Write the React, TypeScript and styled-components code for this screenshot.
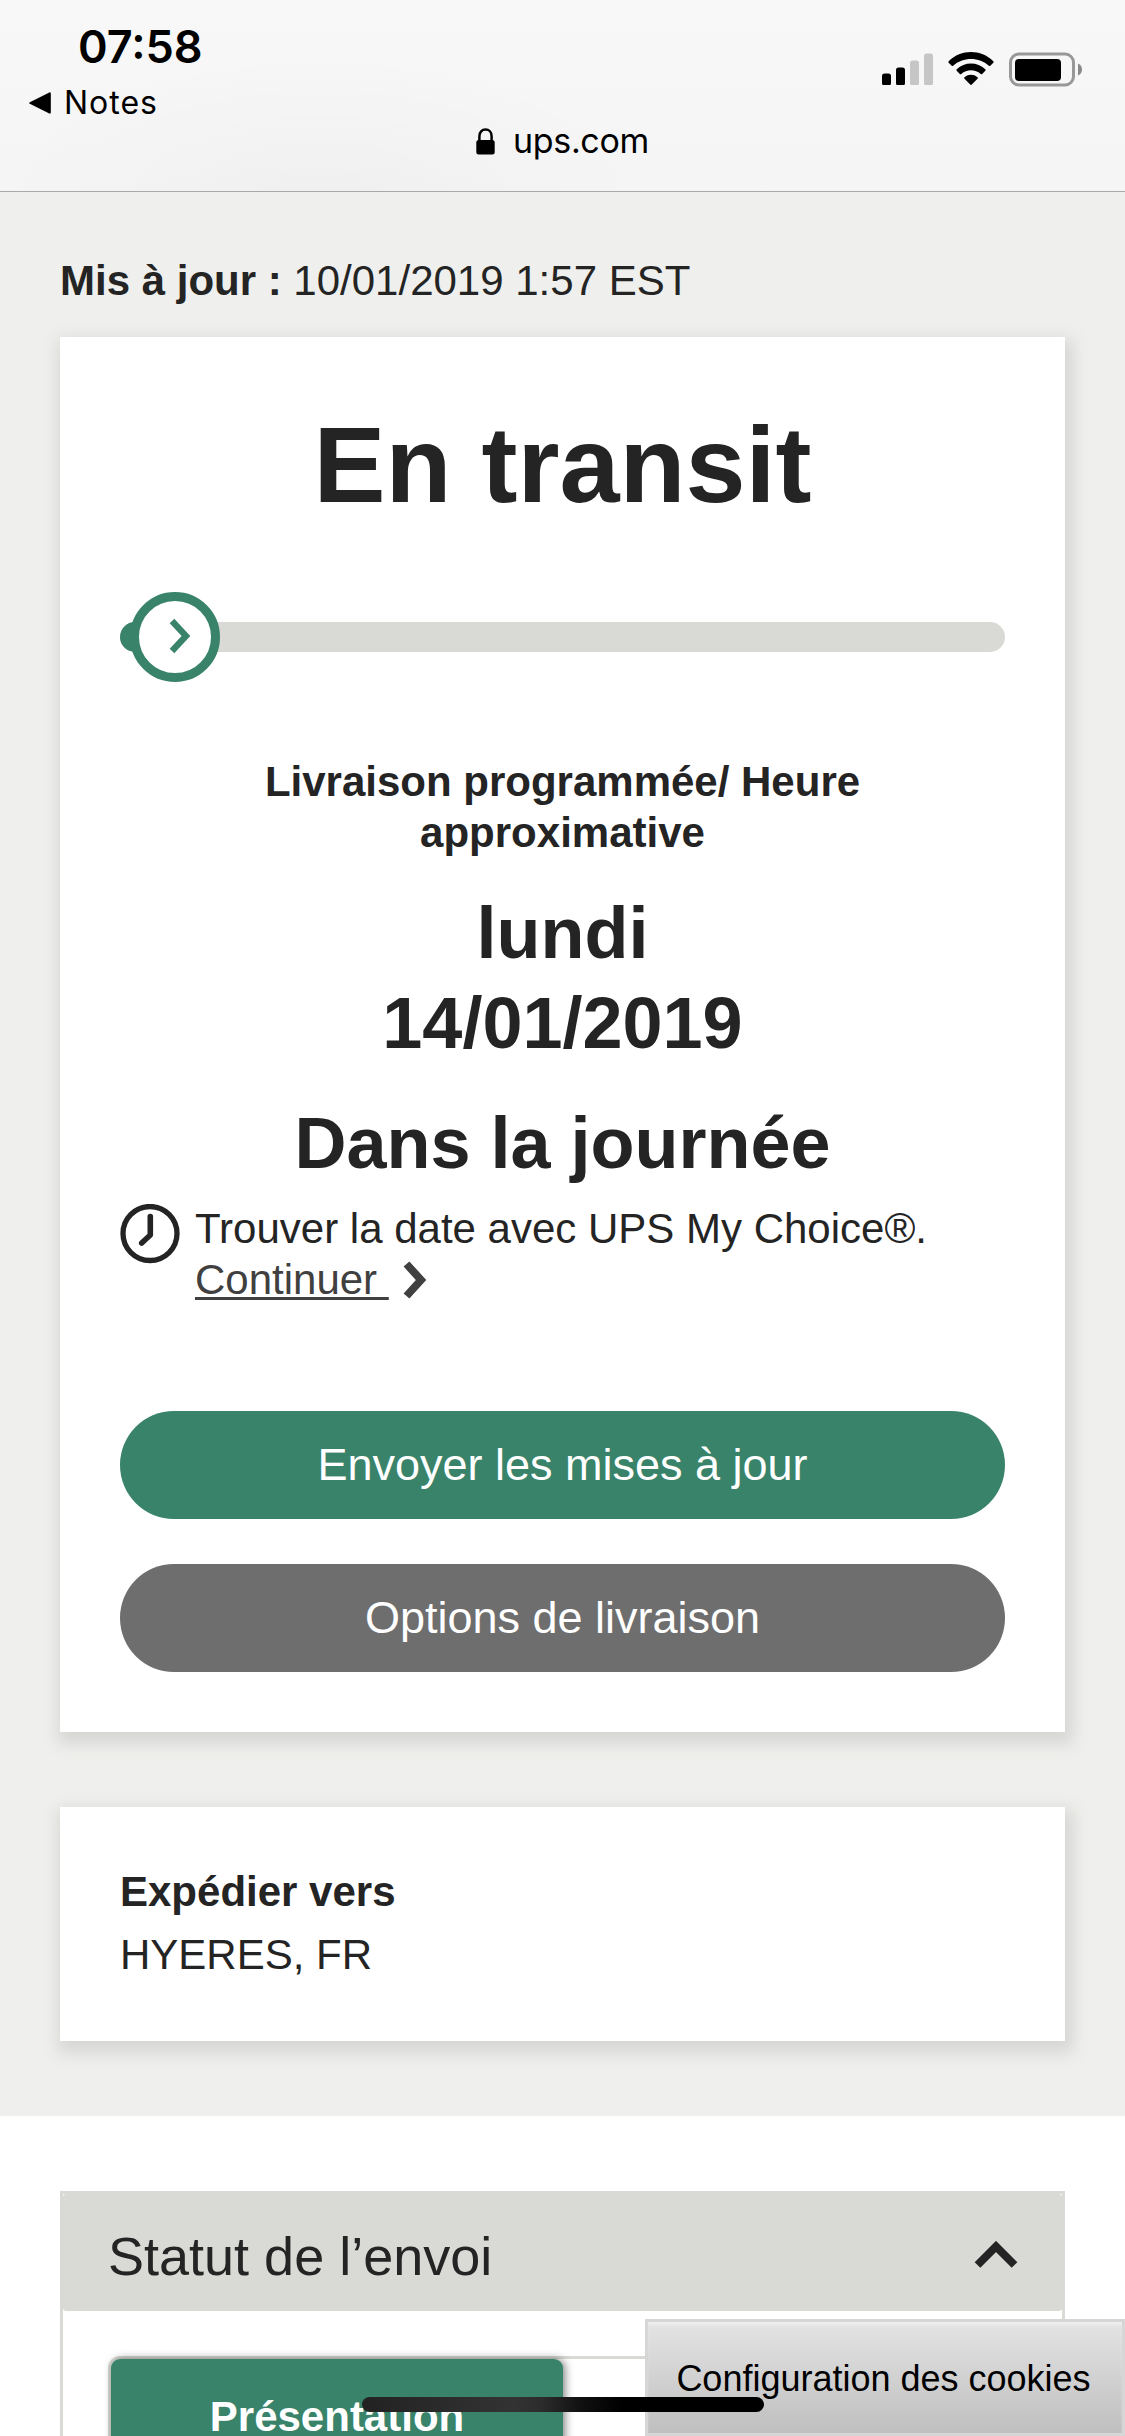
import React from "react";
import styled, { createGlobalStyle } from "styled-components";

const ink = "#242424";
const green = "#39836b";
const stone = "#d9dad5";

const GlobalStyle = createGlobalStyle`
  *, *::before, *::after { box-sizing: border-box; }
  body {
    margin: 0;
    background: #fff;
    color: ${ink};
    font-family: "Liberation Sans", Arial, Helvetica, sans-serif;
    font-size: 42px;
    line-height: 51px;
  }
  h1, h2, p { margin: 0; }
  button { font-family: inherit; cursor: pointer; }
  svg { display: block; flex: none; }
`;

const Screen = styled.div`
  width: 1125px;
  height: 2436px;
  overflow: hidden;
  position: relative;
`;

/* Browser chrome */
const BrowserBar = styled.header`
  display: flex;
  flex-direction: column;
  gap: 2px;
  height: 192px;
  padding-top: 21px;
  border-bottom: 1px solid #a9a9a9;
  background:
    radial-gradient(ellipse 330px 150px at 320px 200px, rgba(0, 0, 0, 0.025), rgba(0, 0, 0, 0) 100%),
    linear-gradient(#f8f8f8, #f5f5f5);
  color: #000;
  font-family: Inter, sans-serif;
`;

const StatusRow = styled.div`
  display: flex;
  justify-content: space-between;
  height: 98px;
  padding: 0 42px 0 29px;
`;

const StatusLeft = styled.div`
  display: flex;
  flex-direction: column;
  gap: 13px;
`;

const Clock = styled.div`
  padding-left: 49px;
  font-size: 45px;
  font-weight: 600;
  line-height: 52px;
`;

const BackLink = styled.div`
  display: flex;
  align-items: center;
  gap: 13px;
  font-size: 32px;
  line-height: 34px;
  letter-spacing: 1px;
`;

const StatusIcons = styled.div`
  display: flex;
  align-items: flex-start;
  padding-top: 30px;
`;

const AddressRow = styled.div`
  display: flex;
  align-items: center;
  justify-content: center;
  gap: 18px;
  font-size: 34px;
  line-height: 40px;
  letter-spacing: -0.3px;
`;

/* Tracking summary */
const Summary = styled.section`
  display: flex;
  flex-direction: column;
  padding: 63px 60px 75px;
  background: #efefed;
`;

const Updated = styled.p`
  margin-bottom: 31px;
`;

const Card = styled.div<{ $pad: string }>`
  display: flex;
  flex-direction: column;
  padding: ${(p) => p.$pad};
  background: #fff;
  box-shadow: 3px 7px 15px 5px #d6d6d4;

  & + & { margin-top: 75px; }
`;

const Status = styled.h1`
  font-size: 108px;
  line-height: 130px;
  text-align: center;
`;

const Progress = styled.div`
  display: flex;
  align-items: center;
  position: relative;
  height: 90px;
  margin: 62px 0 74px;
`;

const Track = styled.div`
  flex: 1;
  height: 30px;
  border-radius: 15px;
  background: ${stone};
  overflow: hidden;
`;

const TrackFill = styled.div`
  width: 55px;
  height: 100%;
  background: ${green};
`;

const Knob = styled.div`
  position: absolute;
  left: 10px;
  top: 0;
  display: grid;
  place-items: center;
  width: 90px;
  height: 90px;
  padding: 0 0 2px 9px;
  border: 9px solid ${green};
  border-radius: 50%;
  background: #fff;
`;

const ScheduleLabel = styled.p`
  padding: 0 120px;
  font-weight: 700;
  text-align: center;
`;

const ScheduleValue = styled.p`
  margin-top: 30px;
  font-size: 72px;
  font-weight: 700;
  line-height: 90px;
  text-align: center;
`;

const ChoiceRow = styled.div`
  display: flex;
  align-items: flex-start;
  gap: 15px;
  margin: 15px 0 106px;

  > svg { margin-top: 1px; }
`;

const ContinueLink = styled.a`
  display: flex;
  align-items: center;
  gap: 14px;
  color: #404040;
`;

const LinkText = styled.span`
  white-space: pre;
  text-decoration: underline;
  text-decoration-thickness: 3px;
  text-underline-offset: 3px;
  text-decoration-skip-ink: none;
`;

const Actions = styled.div`
  display: flex;
  flex-direction: column;
  gap: 45px;
`;

const PillButton = styled.button<{ $tone: string }>`
  height: 108px;
  padding: 0;
  border: 0;
  border-radius: 54px;
  background: ${(p) => p.$tone};
  color: #fff;
  font-size: 45px;
  line-height: 54px;
`;

const FieldName = styled.p`
  margin-bottom: 12px;
  font-weight: 700;
`;

/* Shipment details */
const Details = styled.section`
  padding: 75px 60px 0;
`;

const Panel = styled.div`
  border: 3px solid ${stone};
`;

const PanelHeader = styled.div`
  display: flex;
  align-items: center;
  justify-content: space-between;
  height: 117px;
  padding: 0 44px 0 45px;
  border-radius: 3px;
  background: ${stone};

  > svg { margin-top: 5px; }
`;

const PanelTitle = styled.h2`
  padding-top: 6px;
  font-size: 54px;
  font-weight: 400;
  line-height: 64px;
`;

const Tabs = styled.div`
  display: flex;
  height: 200px;
  margin: 45px 45px 0;
  border: 3px solid ${stone};
  border-radius: 12px;
`;

const Tab = styled.div`
  width: 452px;
  padding-top: 32px;
  border-radius: 9px;
  background: ${green};
  box-shadow: 2px 0 8px 0 rgba(0, 0, 0, 0.5);
  color: #fff;
  font-weight: 700;
  text-align: center;
`;

/* Floating layers */
const CookieButton = styled.button`
  position: absolute;
  right: 0;
  bottom: 0;
  width: 480px;
  height: 117px;
  padding: 2px 3px 0 0;
  border: 3px solid #d6d6d6;
  background: linear-gradient(#e4e4e4, #bfbfbf);
  box-shadow: inset 0 4px 3px -1px #eeeeee;
  color: #000;
  font-size: 36px;
  white-space: nowrap;
`;

const HomeIndicator = styled.div`
  position: absolute;
  left: 362px;
  bottom: 24px;
  width: 402px;
  height: 15px;
  border-radius: 8px;
  background: linear-gradient(90deg, #222 0, #333 150px, #2c2c2c 180px, #101010 220px, #000 260px);
`;

const SignalIcon = () => (
  <svg width="52" height="34" viewBox="0 0 52 34">
    <rect x="0" y="22.500" width="9" height="12" rx="2.500" />
    <rect x="14" y="16.500" width="9" height="18" rx="2.500" />
    <rect x="28" y="9.500" width="9" height="25" rx="2.500" fill="#c6c6c6" />
    <rect x="42" y="2.500" width="9" height="32" rx="2.500" fill="#c6c6c6" />
  </svg>
);

const WifiIcon = () => (
  <svg width="46" height="34" viewBox="0 0 46 34" style={{ marginLeft: 14 }}>
    <path d="M.7 10.200C13-2 33-2 45.300 10.200c.5.500.5 1 0 1.500l-3 3c-.5.500-1 .500-1.500 0C31.500 5.600 14.500 5.600 5.200 14.700c-.5.500-1 .500-1.500 0l-3-3c-.5-.5-.5-1 0-1.500z" />
    <path d="M8.700 18.300C16.600 10.500 29.400 10.500 37.300 18.300c.5.500.5 1 0 1.500l-3.100 3.100c-.5.500-1 .500-1.500 0-5.400-5-14-5-19.400 0-.5.500-1 .500-1.500 0l-3.100-3.100c-.5-.500-.5-1 0-1.500z" />
    <path d="M16.500 26.300c3.700-3.300 9.300-3.300 13 0 .5.400.5 1 0 1.500l-5.700 5.700c-.5.500-1.100.500-1.600 0l-5.700-5.700c-.5-.5-.5-1.100 0-1.500z" />
  </svg>
);

const BatteryIcon = () => (
  <svg width="74" height="36" viewBox="0 0 74 36" style={{ marginLeft: 15 }}>
    <rect x="1.500" y="3" width="63" height="31" rx="8.500" fill="none" stroke="#989898" strokeWidth="3" />
    <rect x="6" y="8" width="46" height="22" rx="4" />
    <path d="M69 12.500c2.500 1 4 3.300 4 6s-1.500 5-4 6z" fill="#8a8a8a" />
  </svg>
);

const BackTriangle = () => (
  <svg width="22" height="22" viewBox="0 0 22 22">
    <path d="M.8 10.200 20.300.5c.9-.4 1.500 0 1.500.9v19.200c0 .9-.6 1.300-1.500.9L.8 11.800c-.9-.5-.9-1.100 0-1.600z" />
  </svg>
);

const LockIcon = () => (
  <svg width="19" height="27" viewBox="0 0 19 27">
    <rect x="0.300" y="12" width="18.400" height="14.500" rx="2.500" />
    <path d="M3.400 13V8.200C3.400 4.300 6 1.600 9.500 1.600s6.100 2.700 6.100 6.600V13" fill="none" stroke="#000" strokeWidth="2.500" />
  </svg>
);

type ChevronProps = { width: number; height: number; points: string; color: string; stroke: number };

const Chevron = ({ width, height, points, color, stroke }: ChevronProps) => (
  <svg width={width} height={height} viewBox={`0 0 ${width} ${height}`}>
    <polyline points={points} fill="none" stroke={color} strokeWidth={stroke} />
  </svg>
);

const ClockIcon = () => (
  <svg width="60" height="60" viewBox="0 0 60 60">
    <circle cx="30" cy="29.500" r="27" fill="none" stroke={ink} strokeWidth="5.300" />
    <path d="M30.300 12.500V31l-8.600 8" fill="none" stroke={ink} strokeWidth="5.600" strokeLinecap="round" strokeLinejoin="round" />
  </svg>
);

export default function App() {
  return (
    <Screen>
      <GlobalStyle />
      <BrowserBar>
        <StatusRow>
          <StatusLeft>
            <Clock>07:58</Clock>
            <BackLink>
              <BackTriangle />
              Notes
            </BackLink>
          </StatusLeft>
          <StatusIcons>
            <SignalIcon />
            <WifiIcon />
            <BatteryIcon />
          </StatusIcons>
        </StatusRow>
        <AddressRow>
          <LockIcon />
          ups.com
        </AddressRow>
      </BrowserBar>

      <Summary>
        <Updated>
          <strong>Mis à jour :</strong> 10/01/2019 1:57 EST
        </Updated>
        <Card $pad="63px 60px 60px">
          <Status>En transit</Status>
          <Progress>
            <Track>
              <TrackFill />
            </Track>
            <Knob>
              <Chevron width={22} height={36} points="3,3 17,18 3,33" color={green} stroke={6.3} />
            </Knob>
          </Progress>
          <ScheduleLabel>Livraison programmée/ Heure approximative</ScheduleLabel>
          <ScheduleValue>
            lundi
            <br />
            14/01/2019
          </ScheduleValue>
          <ScheduleValue>Dans la journée</ScheduleValue>
          <ChoiceRow>
            <ClockIcon />
            <div>
              <p>Trouver la date avec UPS My Choice®.</p>
              <ContinueLink>
                <LinkText>{"Continuer "}</LinkText>
                <Chevron width={24} height={38} points="3.500,3 18,19 3.500,35" color="#404040" stroke={7.8} />
              </ContinueLink>
            </div>
          </ChoiceRow>
          <Actions>
            <PillButton $tone={green}>Envoyer les mises à jour</PillButton>
            <PillButton $tone="#6e6e6e">Options de livraison</PillButton>
          </Actions>
        </Card>
        <Card $pad="59px 60px 61px">
          <FieldName>Expédier vers</FieldName>
          <p>HYERES, FR</p>
        </Card>
      </Summary>

      <Details>
        <Panel>
          <PanelHeader>
            <PanelTitle>Statut de l’envoi</PanelTitle>
            <Chevron width={44} height={28} points="3.500,24 22,5.500 40.500,24" color={ink} stroke={8} />
          </PanelHeader>
          <Tabs>
            <Tab>Présentation</Tab>
          </Tabs>
        </Panel>
      </Details>

      <CookieButton>Configuration des cookies</CookieButton>
      <HomeIndicator />
    </Screen>
  );
}
